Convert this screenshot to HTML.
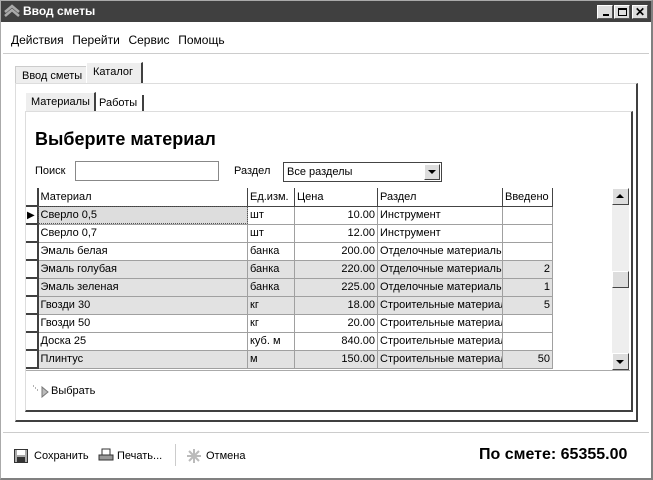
<!DOCTYPE html><html><head><meta charset="utf-8"><style>
*{box-sizing:border-box;margin:0;padding:0}
body{width:653px;height:480px;background:#fff;font:12px "Liberation Sans",sans-serif;color:#000;position:relative;overflow:hidden}
.a{position:absolute}
.bd{border:1px solid #808080}
table{border-collapse:collapse;font-size:11px}
td{border-right:1px solid #a0a0a0;border-bottom:1px solid #a0a0a0;height:18px;padding:0 2px;white-space:nowrap;overflow:hidden}
.g td{background:#e2e2e2}
.g td.i,td.i{background:#fff;border-right:2px solid #404040;border-bottom:2px solid #404040;border-left:1px solid #fff}
.r{text-align:right}
</style></head><body>
<div class="a" style="left:0;top:0;width:653px;height:480px;border:1px solid #aaa;border-right:2px solid #808080;border-bottom:2px solid #808080"></div>
<div class="a" style="left:1px;top:1px;width:650px;height:21px;background:#404040"></div>
<svg class="a" style="left:4px;top:4px" width="16" height="15"><path d="M1 12 L8 6 L15 12 M1 8 L8 2 L15 8" stroke="#aaa" stroke-width="2.5" fill="none"/></svg>
<div class="a" style="left:23px;top:4px;color:#fff;font-weight:bold;font-size:12px">Ввод сметы</div>
<div class="a" style="left:597px;top:5px;width:16px;height:14px;background:#ddd;border:1px solid #fff;border-right-color:#555;border-bottom-color:#555"><div class="a" style="left:5px;top:8px;width:6px;height:2px;background:#000"></div></div>
<div class="a" style="left:614px;top:5px;width:16px;height:14px;background:#ddd;border:1px solid #fff;border-right-color:#555;border-bottom-color:#555"><div class="a" style="left:3px;top:2px;width:9px;height:8px;border:1px solid #000;border-top-width:2px"></div></div>
<div class="a" style="left:632px;top:5px;width:16px;height:14px;background:#ddd;border:1px solid #fff;border-right-color:#555;border-bottom-color:#555;font-weight:bold;font-size:12px;text-align:center;line-height:12px">✕</div>
<div class="a" style="left:11px;top:33px;font-size:12px;word-spacing:1px">Действия&nbsp; Перейти&nbsp; Сервис&nbsp; Помощь</div>
<div class="a" style="left:3px;top:53px;width:646px;height:1px;background:#ccc"></div>
<!-- outer tabs -->
<div class="a" style="left:15px;top:66px;width:72px;height:18px;background:#eee;border:1px solid #ccc;border-bottom:none;font-size:11px;padding:3px 0 0 6px">Ввод сметы</div>
<div class="a" style="left:86px;top:62px;width:57px;height:22px;background:#eee;border:1px solid #fff;border-right:2px solid #404040;font-size:11px;padding:3px 0 0 6px">Каталог</div>
<div class="a" style="left:15px;top:83px;width:197px;height:1px;background:#ddd"></div>
<div class="a" style="left:15px;top:83px;width:623px;height:339px;border:1px solid #ddd;border-right:2px solid #404040;border-bottom:2px solid #404040"></div>
<!-- inner tabs -->
<div class="a" style="left:25px;top:92px;width:71px;height:20px;background:#eee;border:1px solid #fff;border-right:2px solid #404040;font-size:11px;padding:3px 0 0 5px">Материалы</div>
<div class="a" style="left:96px;top:95px;width:48px;height:17px;background:#fff;border-right:2px solid #404040;font-size:11px;padding:2px 0 0 3px">Работы</div>
<div class="a" style="left:25px;top:111px;width:608px;height:301px;border:1px solid #ddd;border-right:2px solid #404040;border-bottom:2px solid #404040"></div>
<div class="a" style="left:35px;top:129px;font-size:18px;font-weight:bold">Выберите материал</div>
<div class="a" style="left:35px;top:165px;font-size:11px">Поиск</div>
<div class="a" style="left:75px;top:161px;width:144px;height:20px;border:1px solid #888"></div>
<div class="a" style="left:234px;top:165px;font-size:11px">Раздел</div>
<div class="a" style="left:283px;top:162px;width:159px;height:20px;border:1px solid #444;font-size:11px;padding:3px 0 0 3px">Все разделы</div>
<div class="a" style="left:424px;top:164px;width:16px;height:16px;background:#ddd;border:1px solid #fff;border-right-color:#444;border-bottom-color:#444"><svg width="14" height="14"><path d="M3 5 L11 5 L7 9Z"/></svg></div>
<!-- grid -->
<div class="a" style="left:26px;top:188px;width:604px;height:183px;border-bottom:1px solid #aaa"></div>
<table class="a" style="left:26px;top:188px;table-layout:fixed;width:526px">
<colgroup><col style="width:11px"><col style="width:210px"><col style="width:47px"><col style="width:83px"><col style="width:125px"><col style="width:50px"></colgroup>
<tr><td class="i"></td><td style="border-right:1px solid #444;border-bottom:1px solid #444">Материал</td><td style="border-right:1px solid #444;border-bottom:1px solid #444">Ед.изм.</td><td style="border-right:1px solid #444;border-bottom:1px solid #444">Цена</td><td style="border-right:1px solid #444;border-bottom:1px solid #444">Раздел</td><td style="border-right:1px solid #444;border-bottom:1px solid #444">Введено</td></tr>
<tr><td class="i" style="font-size:10px;padding:0">▶</td><td style="background:#ddd;outline:1px dotted #555;outline-offset:-1px">Сверло 0,5</td><td>шт</td><td class="r">10.00</td><td>Инструмент</td><td></td></tr>
<tr><td class="i"></td><td>Сверло 0,7</td><td>шт</td><td class="r">12.00</td><td>Инструмент</td><td></td></tr>
<tr><td class="i"></td><td>Эмаль белая</td><td>банка</td><td class="r">200.00</td><td>Отделочные материалы</td><td></td></tr>
<tr class="g"><td class="i"></td><td>Эмаль голубая</td><td>банка</td><td class="r">220.00</td><td>Отделочные материалы</td><td class="r">2</td></tr>
<tr class="g"><td class="i"></td><td>Эмаль зеленая</td><td>банка</td><td class="r">225.00</td><td>Отделочные материалы</td><td class="r">1</td></tr>
<tr class="g"><td class="i"></td><td>Гвозди 30</td><td>кг</td><td class="r">18.00</td><td>Строительные материалы</td><td class="r">5</td></tr>
<tr><td class="i"></td><td>Гвозди 50</td><td>кг</td><td class="r">20.00</td><td>Строительные материалы</td><td></td></tr>
<tr><td class="i"></td><td>Доска 25</td><td>куб. м</td><td class="r">840.00</td><td>Строительные материалы</td><td></td></tr>
<tr class="g"><td class="i"></td><td>Плинтус</td><td>м</td><td class="r">150.00</td><td>Строительные материалы</td><td class="r">50</td></tr>
</table>
<div class="a" style="left:612px;top:188px;width:17px;height:182px;background:#eee"></div>
<div class="a" style="left:612px;top:188px;width:17px;height:17px;background:#ddd;border:1px solid #fff;border-right-color:#444;border-bottom-color:#444"><svg width="15" height="15"><path d="M3 9 L11 9 L7 5Z"/></svg></div>
<div class="a" style="left:612px;top:271px;width:17px;height:17px;background:#ddd;border:1px solid #fff;border-right-color:#444;border-bottom-color:#444"></div>
<div class="a" style="left:612px;top:353px;width:17px;height:17px;background:#ddd;border:1px solid #fff;border-right-color:#444;border-bottom-color:#444"><svg width="15" height="15"><path d="M3 6 L11 6 L7 10Z"/></svg></div>
<svg class="a" style="left:32px;top:384px" width="18" height="14"><path d="M1 2h1M3 4h1M5 6h1" stroke="#666"/><path d="M10 3 L16 8 L10 13Z" fill="#bbb" stroke="#777"/></svg>
<div class="a" style="left:51px;top:385px;font-size:11px">Выбрать</div>
<div class="a" style="left:3px;top:432px;width:646px;height:1px;background:#ccc"></div>
<svg class="a" style="left:14px;top:449px" width="14" height="14"><rect x="0.5" y="0.5" width="13" height="13" fill="#aaa" stroke="#333"/><rect x="3" y="1" width="8" height="5" fill="#fff"/><rect x="3" y="8" width="8" height="5" fill="#333"/></svg>
<div class="a" style="left:34px;top:450px;font-size:11px">Сохранить</div>
<svg class="a" style="left:98px;top:448px" width="16" height="15"><rect x="4" y="1" width="8" height="6" fill="#fff" stroke="#333"/><path d="M1 7h14v5H1z" fill="#999" stroke="#333"/></svg>
<div class="a" style="left:117px;top:450px;font-size:11px">Печать...</div>
<div class="a" style="left:175px;top:444px;width:1px;height:22px;background:#ccc"></div>
<svg class="a" style="left:187px;top:449px" width="14" height="14"><path d="M7 0v14M0 7h14M2 2l10 10M12 2L2 12" stroke="#bbb" stroke-width="2"/></svg>
<div class="a" style="left:206px;top:450px;font-size:11px">Отмена</div>
<div class="a" style="left:479px;top:446px;font-size:16px;font-weight:bold">По смете: 65355.00</div>
</body></html>
